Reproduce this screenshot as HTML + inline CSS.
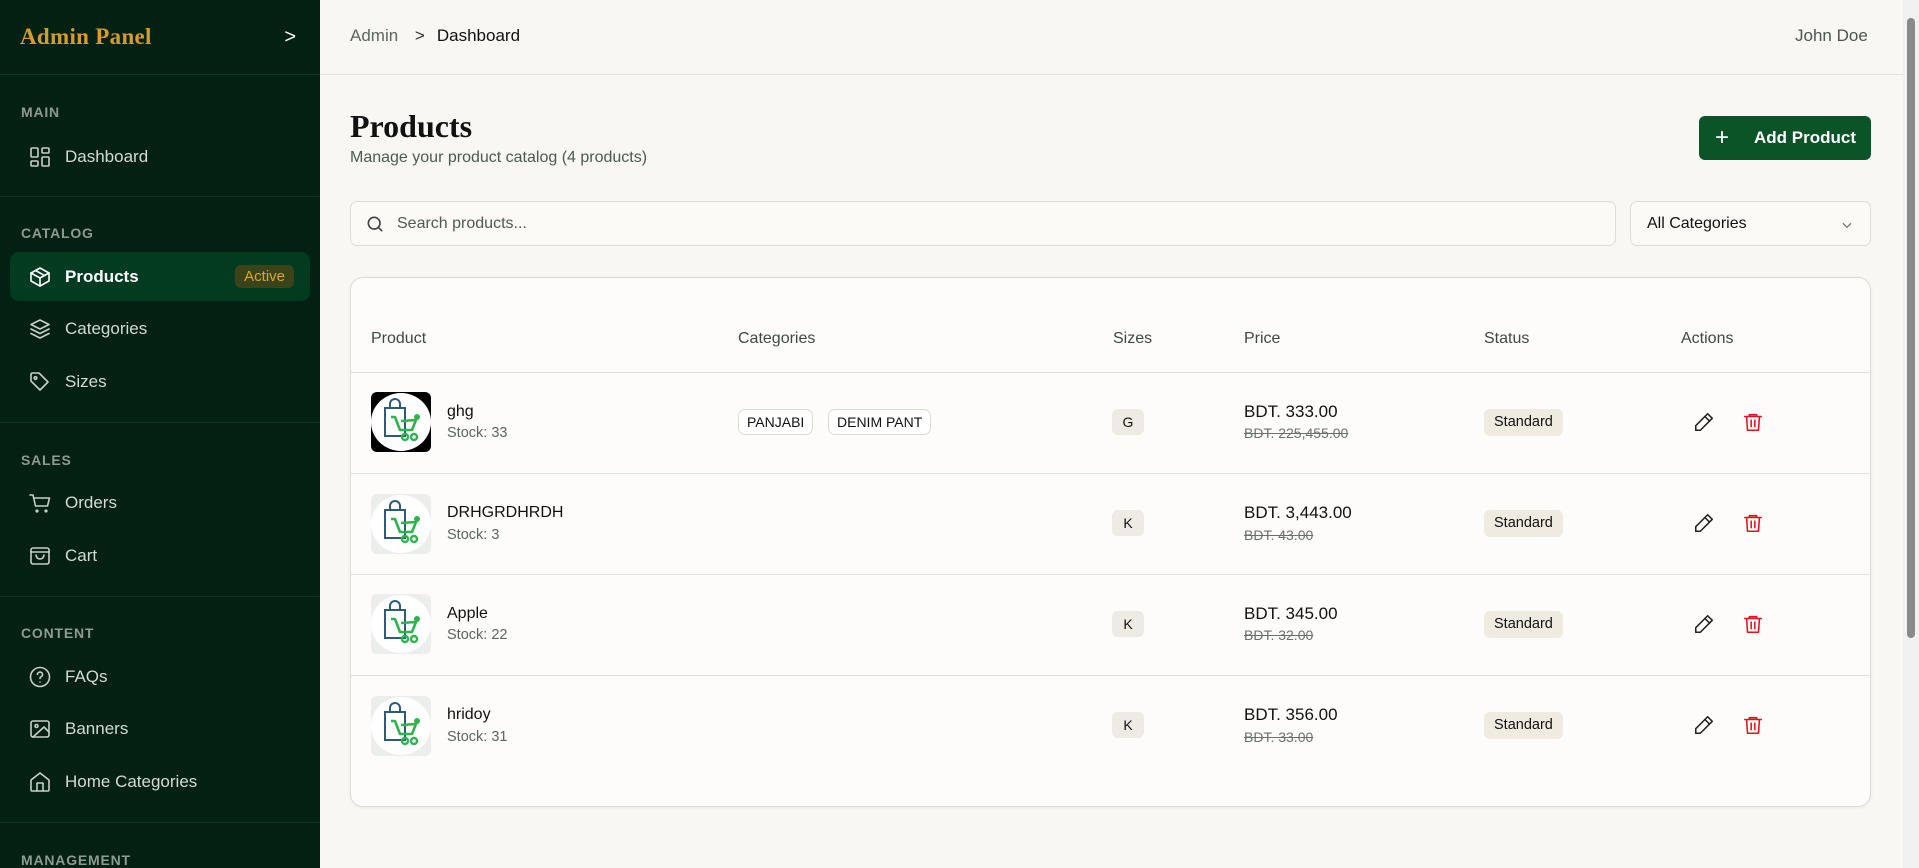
<!DOCTYPE html>
<html><head><meta charset="utf-8"><style>
*{box-sizing:border-box;margin:0;padding:0}
body{width:1919px;height:868px;overflow:hidden;font-family:"Liberation Sans",sans-serif;background:#f8f7f4;position:relative;color:#111}
.sb{position:absolute;left:0;top:0;width:320px;height:868px;background:#022112;color:#d9ddd6}
.sb .hd{height:75px;border-bottom:1px solid #0f3320;display:flex;align-items:center;justify-content:space-between;padding:0 24px 0 20px}
.sb .hd b{font-family:"Liberation Serif",serif;font-size:23px;color:#d89b2a;letter-spacing:.3px}
.lbl{font-size:14px;font-weight:bold;color:#8e9a92;letter-spacing:.8px;padding-left:11px}
.it{position:absolute;left:10px;width:300px;height:48px;display:flex;align-items:center;font-size:17px;color:#d5dad4}
.it svg{position:absolute;left:18px;width:24px;height:24px;fill:none;stroke:#c9cec8;stroke-width:1.6;stroke-linecap:round;stroke-linejoin:round}
.it span{position:absolute;left:55px}
.abs{position:absolute}
.dv{position:absolute;left:0;width:320px;height:1px;background:#0f3320}
.th{position:absolute;top:339px;font-size:16px;color:#3d4a42;transform:translateY(-50%)}
.row{position:absolute;left:350px;width:1521px;height:1px;background:#e2e0da}
.img{position:absolute;left:371px;width:60px;height:60px;border-radius:6px;overflow:hidden}
.name{position:absolute;left:447px;font-size:16px}
.stock{position:absolute;left:447px;font-size:14.5px;color:#5b665f}
.chip{position:absolute;height:26px;padding:0 8px;border:1px solid #dcdad4;border-radius:7px;font-size:14px;line-height:24px;background:#fff}
.sz{position:absolute;left:1112px;width:32px;height:26px;border-radius:6px;background:#eeebe3;font-size:14px;line-height:26px;text-align:center}
.pr{position:absolute;left:1244px;font-size:17px}
.old{position:absolute;left:1244px;font-size:14px;color:#6a716c;text-decoration:line-through}
.st{position:absolute;left:1484px;height:27px;padding:0 10px;border-radius:6px;background:#efebe1;font-size:14.5px;line-height:27px}
.ed,.tr{position:absolute;width:22px;height:22px;fill:none;stroke-width:1.7;stroke-linecap:round;stroke-linejoin:round}
.ed{left:1693px;stroke:#222}.tr{left:1742px;stroke:#e0121e}
</style></head><body>
<div class="sb">
<div class="hd"><b>Admin Panel</b><span style="color:#fff;font-size:20px">&gt;</span></div>
<div class="abs lbl" style="top:104px;left:10px">MAIN</div>
<div class="it" style="top:133px"><svg viewBox="0 0 24 24"><rect x="3" y="3" width="7" height="9" rx="1"/><rect x="14" y="3" width="7" height="5" rx="1"/><rect x="14" y="12" width="7" height="9" rx="1"/><rect x="3" y="16" width="7" height="5" rx="1"/></svg><span>Dashboard</span></div>
<div class="dv" style="top:196px"></div>
<div class="abs lbl" style="top:225px;left:10px">CATALOG</div>
<div class="it" style="top:252px;height:49px;background:#033b20;border-radius:9px;color:#fff;font-weight:bold"><svg viewBox="0 0 24 24" style="stroke:#fff"><path d="M21 8l-9-5-9 5v8l9 5 9-5z"/><path d="M3 8l9 5 9-5M12 13v8M7.5 5.5l9 5"/></svg><span>Products</span><div class="abs" style="right:16px;top:13px;height:23px;padding:0 9px;border-radius:6px;background:#3b4418;color:#e0a32c;font-size:15px;font-weight:normal;line-height:23px">Active</div></div>
<div class="it" style="top:305px"><svg viewBox="0 0 24 24"><path d="M12 3l9 4.5-9 4.5-9-4.5z"/><path d="M3 12l9 4.5 9-4.5M3 16.5l9 4.5 9-4.5"/></svg><span>Categories</span></div>
<div class="it" style="top:358px"><svg viewBox="0 0 24 24"><path d="M3 4v7l9 9 8-8-9-9H4z"/><circle cx="7.5" cy="8" r="1.3"/></svg><span>Sizes</span></div>
<div class="dv" style="top:422px"></div>
<div class="abs lbl" style="top:452px;left:10px">SALES</div>
<div class="it" style="top:479px"><svg viewBox="0 0 24 24"><path d="M2 4h3l2.5 11h12l2-8H6"/><circle cx="9" cy="20" r=".8"/><circle cx="18" cy="20" r=".8"/></svg><span>Orders</span></div>
<div class="it" style="top:532px"><svg viewBox="0 0 24 24"><rect x="3" y="4" width="18" height="16" rx="2"/><path d="M3 8h18M8 11a4 4 0 0 0 8 0"/></svg><span>Cart</span></div>
<div class="dv" style="top:596px"></div>
<div class="abs lbl" style="top:625px;left:10px">CONTENT</div>
<div class="it" style="top:653px"><svg viewBox="0 0 24 24"><circle cx="12" cy="12" r="9.5"/><path d="M9.5 9.5a2.5 2.5 0 1 1 3.5 2.3c-.7.3-1 .9-1 1.7M12 17h0"/></svg><span>FAQs</span></div>
<div class="it" style="top:705px"><svg viewBox="0 0 24 24"><rect x="3" y="4" width="18" height="16" rx="2"/><circle cx="8.5" cy="9" r="1.5"/><path d="M21 15l-5-5L5 20"/></svg><span>Banners</span></div>
<div class="it" style="top:758px"><svg viewBox="0 0 24 24"><path d="M3 10l9-7 9 7v10a1 1 0 0 1-1 1H4a1 1 0 0 1-1-1z"/><path d="M9 21v-8h6v8"/></svg><span>Home Categories</span></div>
<div class="dv" style="top:822px"></div>
<div class="abs lbl" style="top:852px;left:10px">MANAGEMENT</div>
</div>

<div class="abs" style="left:320px;top:0;width:1583px;height:75px;border-bottom:1px solid #e4e2dc;background:#f8f7f4"></div>
<div class="abs" style="left:350px;top:26px;font-size:17px;color:#5b665f">Admin <span style="margin:0 12px;color:#333">&gt;</span><span style="color:#111">Dashboard</span></div>
<div class="abs" style="left:1795px;top:26px;font-size:17px;color:#4c5650">John Doe</div>

<div class="abs" style="left:350px;top:108px;font-family:'Liberation Serif',serif;font-weight:bold;font-size:32px">Products</div>
<div class="abs" style="left:350px;top:149px;font-size:16px;color:#4d5a52">Manage your product catalog (4 products)</div>
<div class="abs" style="left:1699px;top:116px;width:172px;height:44px;background:#0a5427;border-radius:6px;color:#fff;font-size:17px;font-weight:bold;line-height:44px"><span style="position:absolute;left:16px;font-size:24px;font-weight:normal">+</span><span style="position:absolute;left:55px">Add Product</span></div>

<div class="abs" style="left:350px;top:201px;width:1266px;height:45px;border:1px solid #dedcd5;border-radius:7px;background:#fbfaf7"><svg style="position:absolute;left:14px;top:12px" width="20" height="20" viewBox="0 0 24 24" fill="none" stroke="#444" stroke-width="2" stroke-linecap="round"><circle cx="11" cy="11" r="7"/><path d="M20 20l-4-4"/></svg><span style="position:absolute;left:46px;top:13px;font-size:16px;color:#4f5a53">Search products...</span></div>
<div class="abs" style="left:1630px;top:201px;width:241px;height:45px;border:1px solid #dedcd5;border-radius:7px;background:#fbfaf7"><span style="position:absolute;left:16px;top:13px;font-size:16px">All Categories</span><svg style="position:absolute;right:16px;top:16px" width="14" height="14" viewBox="0 0 24 24" fill="none" stroke="#777" stroke-width="2.2"><path d="M5 9l7 7 7-7"/></svg></div>

<div class="abs" style="left:350px;top:277px;width:1521px;height:530px;border:1px solid #dedcd5;border-radius:13px;background:#fdfcfa;box-shadow:0 1px 3px rgba(0,0,0,.06)"></div>
<div class="th" style="left:371px">Product</div><div class="th" style="left:738px">Categories</div><div class="th" style="left:1113px">Sizes</div><div class="th" style="left:1244px">Price</div><div class="th" style="left:1484px">Status</div><div class="th" style="left:1681px">Actions</div>
<div class="row" style="top:372px"></div><div class="row" style="top:473px"></div><div class="row" style="top:574px"></div><div class="row" style="top:675px"></div>

<svg width="0" height="0" style="position:absolute"><defs><g id="logo"><ellipse cx="30" cy="30" rx="30" ry="29" fill="#fff"/><path d="M14 16h20v28H14z" fill="none" stroke="#2f5a7a" stroke-width="2"/><path d="M19 16v-4a5 5 0 0 1 10 0v4" fill="none" stroke="#2f5a7a" stroke-width="2"/><path d="M20 25h4l5 13h12l4-10-15 1" fill="none" stroke="#2bb54c" stroke-width="2.6" stroke-linejoin="round"/><circle cx="46" cy="25" r="3" fill="#2bb54c"/><circle cx="34" cy="45" r="3" fill="none" stroke="#2bb54c" stroke-width="2.4"/><circle cx="43" cy="45" r="3" fill="none" stroke="#2bb54c" stroke-width="2.4"/></g>
<g id="ed"><path d="M16 3l5 5L8 21H3v-5z"/><path d="M13 6l5 5"/></g>
<g id="tr"><path d="M3 6h18M8 6V4h8v2M5 6l1 15h12l1-15M10 10v7M14 10v7"/></g></defs></svg>

<div class="img" style="top:392px;background:#000"><svg width="60" height="60"><use href="#logo"/></svg></div>
<div class="name" style="top:403px">ghg</div><div class="stock" style="top:425px">Stock: 33</div>
<div class="chip" style="left:738px;top:409px">PANJABI</div><div class="chip" style="left:828px;top:409px">DENIM PANT</div>
<div class="sz" style="top:409px">G</div>
<div class="pr" style="top:402px">BDT. 333.00</div><div class="old" style="top:425px">BDT. 225,455.00</div>
<div class="st" style="top:409px">Standard</div>
<svg class="ed" style="top:411px" viewBox="0 0 24 24"><use href="#ed"/></svg><svg class="tr" style="top:411px" viewBox="0 0 24 24"><use href="#tr"/></svg>

<div class="img" style="top:494px;background:#eceeeb"><svg width="60" height="60"><use href="#logo"/></svg></div>
<div class="name" style="top:504px">DRHGRDHRDH</div><div class="stock" style="top:527px">Stock: 3</div>
<div class="sz" style="top:510px">K</div>
<div class="pr" style="top:503px">BDT. 3,443.00</div><div class="old" style="top:527px">BDT. 43.00</div>
<div class="st" style="top:510px">Standard</div>
<svg class="ed" style="top:512px" viewBox="0 0 24 24"><use href="#ed"/></svg><svg class="tr" style="top:512px" viewBox="0 0 24 24"><use href="#tr"/></svg>

<div class="img" style="top:594px;background:#eceeeb"><svg width="60" height="60"><use href="#logo"/></svg></div>
<div class="name" style="top:605px">Apple</div><div class="stock" style="top:627px">Stock: 22</div>
<div class="sz" style="top:611px">K</div>
<div class="pr" style="top:604px">BDT. 345.00</div><div class="old" style="top:627px">BDT. 32.00</div>
<div class="st" style="top:611px">Standard</div>
<svg class="ed" style="top:613px" viewBox="0 0 24 24"><use href="#ed"/></svg><svg class="tr" style="top:613px" viewBox="0 0 24 24"><use href="#tr"/></svg>

<div class="img" style="top:696px;background:#eceeeb"><svg width="60" height="60"><use href="#logo"/></svg></div>
<div class="name" style="top:706px">hridoy</div><div class="stock" style="top:729px">Stock: 31</div>
<div class="sz" style="top:712px">K</div>
<div class="pr" style="top:705px">BDT. 356.00</div><div class="old" style="top:729px">BDT. 33.00</div>
<div class="st" style="top:712px">Standard</div>
<svg class="ed" style="top:714px" viewBox="0 0 24 24"><use href="#ed"/></svg><svg class="tr" style="top:714px" viewBox="0 0 24 24"><use href="#tr"/></svg>

<div class="abs" style="left:1903px;top:0;width:16px;height:868px;background:#f1f1f1"><div style="position:absolute;left:4px;top:18px;width:8px;height:620px;border-radius:4px;background:#8a8a8a"></div></div>
</body></html>
